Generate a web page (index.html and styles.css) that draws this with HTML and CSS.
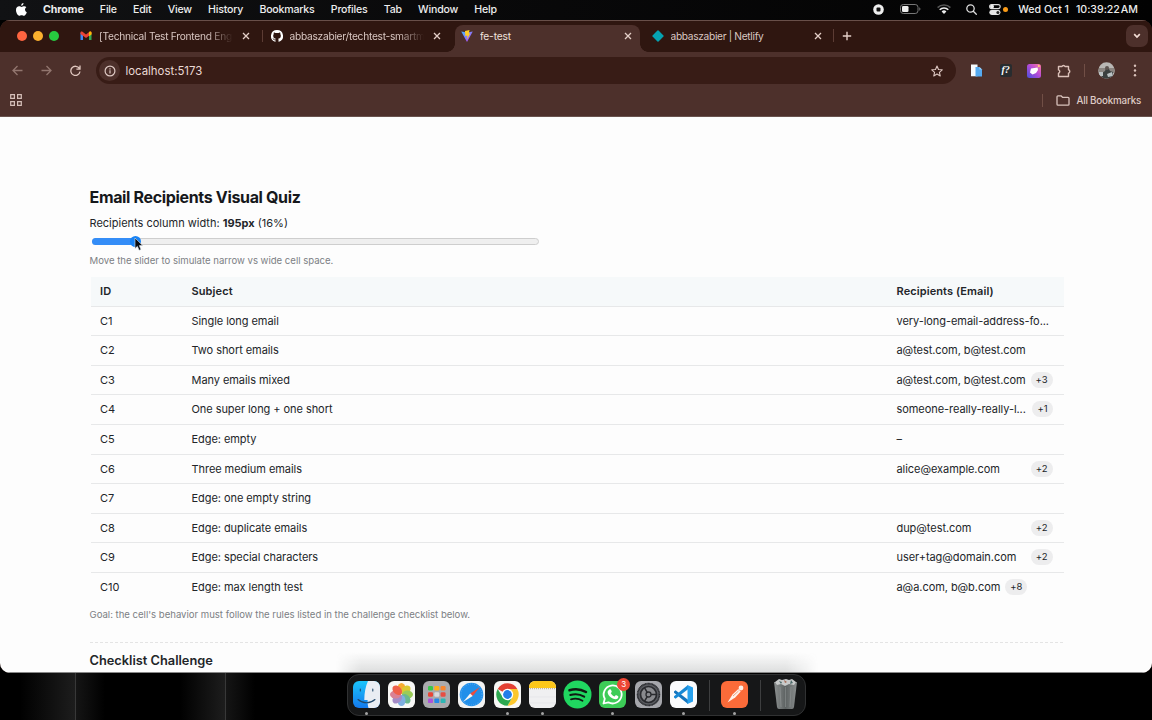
FILE: index.html
```html
<!DOCTYPE html>
<html lang="en">
<head>
<meta charset="utf-8">
<title>fe-test</title>
<link rel="stylesheet" href="styles.css">
</head>
<body>
<div class="desktop">
  <header class="menubar">
    <svg class="apple" width="11" height="13" viewBox="0 0 22 26"><path fill="#fff" d="M15 0c.3 3-2 5.500-4.600 5.500C10 2.500 12.500.3 15 0zM20.700 8.600c-4 2.500-3.200 8 .9 9.700-1 3-3.200 7-5.700 7-1.800 0-2.500-1-4.700-1s-3 1-4.700 1C3 25.300 0 19 0 14.200 0 9 3 6.600 6.200 6.600c2 0 3.700 1.200 5 1.200 1.200 0 3-1.300 5.400-1.300 1.600 0 3.200.8 4.100 2.100z"/></svg>
    <nav class="menus"><b>Chrome</b><span>File</span><span>Edit</span><span>View</span><span>History</span><span>Bookmarks</span><span>Profiles</span><span>Tab</span><span>Window</span><span>Help</span></nav>
    <div class="status">
      <svg class="st-rec" width="11" height="11" viewBox="0 0 11 11"><circle cx="5.500" cy="5.500" r="5.300" fill="#eee"/><rect x="3.500" y="3.500" width="4" height="4" rx="1" fill="#111"/></svg>
      <svg class="st-bat" width="21" height="10" viewBox="0 0 21 10"><rect x=".5" y=".5" width="17.500" height="9" rx="2.800" fill="none" stroke="#777"/><rect x="2" y="2" width="6.500" height="6" rx="1.300" fill="#eee"/><path d="M19.300 3.300v3.400c1.500-.6 1.500-2.800 0-3.400z" fill="#777"/></svg>
      <svg class="st-wifi" width="14" height="10" viewBox="0 0 14 10"><g fill="none" stroke-width="1.600"><path stroke="#555" d="M.6 3.600a9 9 0 0 1 12.800 0"/><path stroke="#eee" d="M2.700 5.800a6 6 0 0 1 8.600 0"/></g><path fill="#eee" d="M7 10 4.600 7.500a3.400 3.400 0 0 1 4.800 0z"/></svg>
      <svg class="st-find" width="11" height="11" viewBox="0 0 11 11" fill="none" stroke="#ddd" stroke-width="1.300" stroke-linecap="round"><circle cx="4.500" cy="4.500" r="3.700"/><path d="m7.300 7.300 3 3"/></svg>
      <svg class="st-cc" width="12" height="11" viewBox="0 0 12 11"><rect x=".6" y=".6" width="10.600" height="4" rx="2" fill="none" stroke="#ddd" stroke-width="1.100"/><circle cx="3" cy="2.600" r="2" fill="#eee"/><rect x=".3" y="6" width="11.200" height="4.900" rx="2.400" fill="#e5e5e5"/><circle cx="8.900" cy="8.450" r="1.500" fill="#222"/></svg>
      <i class="mic"></i><span class="date">Wed Oct 1</span><span class="clock">10:39:22<span class="ampm">AM</span></span>
    </div>
  </header>

  <main class="browser">
    <div class="tabstrip">
      <div class="lights"><i class="red"></i><i class="yellow"></i><i class="green"></i></div>
      <div class="tab">
        <svg class="fav" viewBox="0 0 24 24"><path d="M1 5v15h5V10z" fill="#4285f4"/><path d="M23 5v15h-5V10z" fill="#34a853"/><path d="M1 8V5c0-2 2.500-3 4-1.500l7 5.500 7-5.500C20.500 2 23 3 23 5v3l-11 8z" fill="#ea4335"/><path d="m18 4 1-.5C20.500 2 23 3 23 5v4l-5 3.500z" fill="#fbbc04"/></svg>
        <span class="tab-title fade">[Technical Test Frontend Engi</span><svg class="close" viewBox="0 0 8 8"><path d="m1 1 6 6M7 1 1 7"/></svg>
      </div>
      <div class="tab divided">
        <svg class="fav" viewBox="0 0 16 16"><path fill="#fff" d="M8 0a8 8 0 0 0-2.530 15.590c.4.070.55-.17.55-.38v-1.490c-2.010.37-2.530-.49-2.690-.94-.09-.23-.48-.94-.82-1.130-.28-.15-.68-.52-.01-.53.630-.01 1.080.58 1.230.82.720 1.210 1.870.87 2.330.66.070-.52.280-.87.510-1.070-1.780-.2-3.640-.89-3.640-3.950 0-.87.310-1.590.82-2.150-.08-.2-.36-1.020.08-2.120 0 0 .67-.21 2.200.82a7.400 7.400 0 0 1 4 0c1.530-1.040 2.200-.82 2.200-.82.440 1.100.160 1.920.080 2.120.51.560.82 1.270.82 2.150 0 3.070-1.870 3.750-3.650 3.950.29.250.54.730.54 1.480v2.200c0 .21.150.46.550.38A8 8 0 0 0 8 0z"/></svg>
        <span class="tab-title fade">abbaszabier/techtest-smartm</span><svg class="close" viewBox="0 0 8 8"><path d="m1 1 6 6M7 1 1 7"/></svg>
      </div>
      <div class="tab active">
        <svg class="fav" viewBox="0 0 24 24"><defs><linearGradient id="vite" x1="0" y1="0" x2="1" y2="1"><stop stop-color="#41b9ff"/><stop offset="1" stop-color="#c838f0"/></linearGradient></defs><path fill="url(#vite)" d="M.5 3 12 5l11.500-2L12 24z"/><path fill="#ffce27" d="m8 2 9-2-1.500 7 3-.5L12 19l1-8-4.500 1z"/></svg>
        <span class="tab-title">fe-test</span><svg class="close" viewBox="0 0 8 8"><path d="m1 1 6 6M7 1 1 7"/></svg>
      </div>
      <div class="tab">
        <svg class="fav" viewBox="0 0 24 24"><rect x="3.500" y="3.500" width="17" height="17" rx="1.500" transform="rotate(45 12 12)" fill="#05a2b1"/></svg>
        <span class="tab-title short">abbaszabier | Netlify</span><svg class="close" viewBox="0 0 8 8"><path d="m1 1 6 6M7 1 1 7"/></svg>
      </div>
      <div class="newtab"><svg width="10" height="10" viewBox="0 0 10 10"><path d="M5 .8v8.400M.8 5h8.400"/></svg></div>
      <div class="tabsearch"><svg width="8" height="6" viewBox="0 0 8 6"><path d="m1.200 1.200 2.800 2.800 2.800-2.800"/></svg></div>
    </div>

    <div class="toolbar">
      <div class="nav">
        <svg class="dim" width="11" height="11" viewBox="0 0 11 11"><path d="M10.500 5.500H1M5.500 1 1 5.500 5.500 10"/></svg>
        <svg class="dim" width="11" height="11" viewBox="0 0 11 11"><path d="M.5 5.500H10M5.500 1 10 5.500 5.500 10"/></svg>
        <svg width="11" height="11" viewBox="0 0 11 11"><path d="M9.400 3.500A4.600 4.600 0 1 0 10 6.500M10 .5v3.600H6.400"/></svg>
      </div>
      <div class="omnibox">
        <span class="info"><svg width="12" height="12" viewBox="0 0 12 12"><circle cx="6" cy="6" r="4.900" fill="none" stroke="#ddc8c3" stroke-width="1.200"/><path d="M6 5.300v3.200M6 3.200v1.200" stroke="#ddc8c3" stroke-width="1.200"/></svg></span>
        <span class="url">localhost:5173</span>
        <svg width="12" height="12" viewBox="0 0 24 24" fill="none" stroke="#dcc6c0" stroke-width="2.200" stroke-linejoin="round"><path d="m12 2 3 7 7.500.6-5.700 5 1.700 7.400L12 18l-6.500 4 1.700-7.400-5.700-5L9 9z"/></svg>
      </div>
      <div class="extensions">
        <svg width="12" height="13" viewBox="0 0 12 13"><path fill="#f6fbff" d="M0 .6h6.500v11.700H0z"/><path fill="#55aaf1" d="M4.500 3h4L11 5.500v7H4.500z"/><path fill="#a5d5fa" d="M8.500 3 11 5.500H8.500z"/></svg>
        <span class="font-ext">f?</span>
        <svg width="14" height="14" viewBox="0 0 14 14"><defs><linearGradient id="ext" x1="0" y1="1" x2="1" y2="0"><stop stop-color="#4750dc"/><stop offset=".55" stop-color="#b94bd7"/><stop offset="1" stop-color="#fb7a99"/></linearGradient></defs><rect width="14" height="14" rx="2.500" fill="url(#ext)"/><path fill="#fff" d="M4 4.500 10.600 3.500 11 6l-2 3-3.500 1.500L3 8.500z"/><circle cx="11.800" cy="2" r="1" fill="#ffd36b"/></svg>
        <svg width="14" height="14" viewBox="0 0 14 14" fill="none" stroke="#dbc0b8" stroke-width="1.400" stroke-linejoin="round"><path d="M1.500 2.500H5a1.600 1.600 0 0 1 3 0h3.500v3.300a1.700 1.700 0 0 1 0 3.300v3.400h-10V9.200a1.700 1.700 0 0 0 0-3.300z"/></svg>
      </div>
      <i class="vline tool-line"></i>
      <svg class="avatar" width="17" height="17" viewBox="0 0 17 17"><defs><clipPath id="face"><circle cx="8.500" cy="8.500" r="8.200"/></clipPath></defs><g clip-path="url(#face)"><path fill="#b9b7b4" d="M0 0h17v17H0z"/><path fill="#8b8581" d="M0 6h17v5H0z"/><path fill="#3b4040" d="M3 17l1-6 3-2 1-3 3 1 1 2 3 1v7z"/><circle cx="9" cy="6" r="2" fill="#5e5450"/><path fill="#bbc2c4" d="M1 10h4v4H1zM9 12l5-2 1 4-5 1z"/></g></svg>
      <svg class="dots" width="4" height="13" viewBox="0 0 4 13" fill="#dac2bb"><circle cx="2" cy="1.800" r="1.200"/><circle cx="2" cy="6.500" r="1.200"/><circle cx="2" cy="11.200" r="1.200"/></svg>
    </div>
    <div class="bookmarks">
      <svg width="12" height="12" viewBox="0 0 12 12" fill="none" stroke="#d5bfb9" stroke-width="1.200"><path d="M.7.700h3.700v3.700H.7zM7.600.700h3.700v3.700H7.600zM.7 7.600h3.700v3.700H.7zM7.600 7.600h3.700v3.700H7.600z"/></svg>
      <i class="vline book-line"></i>
      <svg width="14" height="11" viewBox="0 0 14 11" fill="none" stroke="#d8c2bc" stroke-width="1.300" stroke-linejoin="round"><path d="M1 1.800q0-1 1-1h3L6.500 2.300H12q1 0 1 1v5.900q0 1-1 1H2q-1 0-1-1z"/></svg>
      <span>All Bookmarks</span>
    </div>

    <section class="page">
      <h1>Email Recipients Visual Quiz</h1>
      <p class="width-label">Recipients column width: <b>195px</b> (16%)</p>
      <div class="slider"><div class="slider-fill"></div><i class="thumb"></i>
        <svg class="cursor" width="10" height="15" viewBox="0 0 10 15"><path d="M1 1v10.500l2.400-2.200 1.700 4 1.900-.8-1.700-3.900h3.400z" fill="#080b10" stroke="#dfe8f0" stroke-width=".6"/></svg>
      </div>
      <p class="hint">Move the slider to simulate narrow vs wide cell space.</p>
      <div class="table">
        <div class="row head"><span>ID</span><span>Subject</span><span>Recipients (Email)</span></div>
        <div class="row"><span>C1</span><span>Single long email</span><div class="emails"><span>very-long-email-address-fo...</span></div></div>
        <div class="row"><span>C2</span><span>Two short emails</span><div class="emails"><span>a@test.com, b@test.com</span></div></div>
        <div class="row"><span>C3</span><span>Many emails mixed</span><div class="emails"><span>a@test.com, b@test.com</span><em>+3</em></div></div>
        <div class="row"><span>C4</span><span>One super long + one short</span><div class="emails spread"><span>someone-really-really-l...</span><em>+1</em></div></div>
        <div class="row"><span>C5</span><span>Edge: empty</span><div class="emails"><span>–</span></div></div>
        <div class="row"><span>C6</span><span>Three medium emails</span><div class="emails spread"><span>alice@example.com</span><em>+2</em></div></div>
        <div class="row"><span>C7</span><span>Edge: one empty string</span><div class="emails"></div></div>
        <div class="row"><span>C8</span><span>Edge: duplicate emails</span><div class="emails spread"><span>dup@test.com</span><em>+2</em></div></div>
        <div class="row"><span>C9</span><span>Edge: special characters</span><div class="emails spread"><span>user+tag@domain.com</span><em>+2</em></div></div>
        <div class="row last"><span>C10</span><span>Edge: max length test</span><div class="emails"><span>a@a.com, b@b.com</span><em>+8</em></div></div>
      </div>
      <p class="goal">Goal: the cell's behavior must follow the rules listed in the challenge checklist below.</p>
      <h2>Checklist Challenge</h2>
      <div class="dock-glow"></div>
    </section>
  </main>

  <footer class="shelf">
    <div class="dock">
      <div class="app running"><svg viewBox="0 0 27 27"><defs><clipPath id="app"><rect width="27" height="27" rx="6"/></clipPath><linearGradient id="finder" x2="0" y2="1"><stop stop-color="#1bc5fb"/><stop offset="1" stop-color="#1479ed"/></linearGradient></defs><g clip-path="url(#app)"><path fill="url(#finder)" d="M0 0h27v27H0z"/><path fill="#e9edf3" d="M15 0h12v27H15.500c-.7-2-.9-5-.9-8h-3.300c0-7 1.200-13.500 3.700-19z"/><g fill="none" stroke="#20486b" stroke-width="1.100" stroke-linecap="round"><path d="M7.300 8v2M19.800 8v2M5 18.500c5 4.300 12 4.300 17 0"/></g></g></svg></div>
      <div class="app"><svg viewBox="0 0 27 27"><rect width="27" height="27" rx="6" fill="#f8f8f6"/><g opacity=".9"><ellipse cx="13.500" cy="7.500" rx="4" ry="5.500" fill="#f7a51c"/><ellipse cx="13.500" cy="7.500" rx="4" ry="5.500" fill="#d9c61e" transform="rotate(45 13.500 13.500)"/><ellipse cx="13.500" cy="7.500" rx="4" ry="5.500" fill="#91c748" transform="rotate(90 13.500 13.500)"/><ellipse cx="13.500" cy="7.500" rx="4" ry="5.500" fill="#5bb383" transform="rotate(135 13.500 13.500)"/><ellipse cx="13.500" cy="7.500" rx="4" ry="5.500" fill="#73a8df" transform="rotate(180 13.500 13.500)"/><ellipse cx="13.500" cy="7.500" rx="4" ry="5.500" fill="#9c80c1" transform="rotate(225 13.500 13.500)"/><ellipse cx="13.500" cy="7.500" rx="4" ry="5.500" fill="#d6758b" transform="rotate(270 13.500 13.500)"/><ellipse cx="13.500" cy="7.500" rx="4" ry="5.500" fill="#ef5038" transform="rotate(315 13.500 13.500)"/></g></svg></div>
      <div class="app"><svg viewBox="0 0 27 27"><rect width="27" height="27" rx="6" fill="#aaaaad"/><g><rect x="5" y="5" width="5" height="4.500" rx="1.200" fill="#39c84b"/><rect x="11.300" y="5" width="5" height="4.500" rx="1.200" fill="#ffb019"/><rect x="17.600" y="5" width="5" height="4.500" rx="1.200" fill="#f78630"/><rect x="5" y="11.300" width="5" height="4.500" rx="1.200" fill="#e94435"/><rect x="11.300" y="11.300" width="5" height="4.500" rx="1.200" fill="#d9d9dc"/><rect x="17.600" y="11.300" width="5" height="4.500" rx="1.200" fill="#e64e43"/><rect x="5" y="17.600" width="5" height="4.500" rx="1.200" fill="#ad52d9"/><rect x="11.300" y="17.600" width="5" height="4.500" rx="1.200" fill="#2588e8"/><rect x="17.600" y="17.600" width="5" height="4.500" rx="1.200" fill="#2db6b4"/></g></svg></div>
      <div class="app"><svg viewBox="0 0 27 27"><rect width="27" height="27" rx="6" fill="#f3f3f2"/><circle cx="13.500" cy="13.500" r="11.800" fill="#228fea"/><circle cx="13.500" cy="13.500" r="10.500" fill="none" stroke="#82c3f4" stroke-width="1" stroke-dasharray=".5 1.500"/><path fill="#ee4c3d" d="m22 6-7.300 9-2.500-2.500z"/><path fill="#f6f6f6" d="m5 21 7.200-8.500 2.500 2.500z"/></svg></div>
      <div class="app running"><svg viewBox="0 0 27 27"><rect width="27" height="27" rx="6" fill="#f7f7f5"/><path fill="#e34134" d="M13.500 13.500 3.700 7.900A11.300 11.300 0 0 1 23.300 7.900H13.500z"/><path fill="#fcc72c" d="M13.500 8h9.800a11.300 11.300 0 0 1-9.800 16.800l4.800-8.500z"/><path fill="#2da84f" d="M3.700 7.900a11.300 11.300 0 0 0 9.800 16.900l4.800-8.500H8.700z"/><circle cx="13.500" cy="13.500" r="5.700" fill="#fff"/><circle cx="13.500" cy="13.500" r="4.400" fill="#247de9"/></svg></div>
      <div class="app running"><svg viewBox="0 0 27 27"><g clip-path="url(#app)"><path fill="#f0f0f1" d="M0 0h27v27H0z"/><path fill="#fdc719" d="M0 0h27v7H0z"/><path d="M1 7.700h25" stroke="#b7a987" stroke-dasharray="1 1"/><path d="M0 16h27M0 22h27" stroke="#e4e4e6" stroke-width=".7"/></g></svg></div>
      <div class="app"><svg viewBox="0 0 27 27"><circle cx="13.500" cy="13.500" r="14" fill="#20d760"/><g fill="none" stroke="#101a12" stroke-linecap="round"><path d="M5.500 9.300c5.600-1.700 11.500-1.100 16.500 1.700" stroke-width="2.500"/><path d="M6.300 14c4.700-1.400 9.700-.9 13.900 1.600" stroke-width="2.100"/><path d="M7 18.300c4-1.100 8-.7 11.500 1.400" stroke-width="1.800"/></g></svg></div>
      <div class="app running"><svg viewBox="0 0 27 27"><rect width="27" height="27" rx="6" fill="#3dcc57"/><path fill="none" stroke="#fff" stroke-width="1.800" stroke-linejoin="round" d="m4.500 22.500 1.300-4.700a9 9 0 1 1 3.500 3.500z"/><path fill="#fff" d="M10.400 8.600c.6-.5 1.400-.3 1.700.4l.7 1.700-1 1.500c.9 1.600 2.100 2.600 3.800 3.200l1.300-1.300 2 1c.8.500.5 1.700-.2 2.400-1.200 1.100-2.900 1-5 0-2.400-1.200-4.400-3.300-5-5.600-.3-1.400.5-2.500 1.700-3.300z"/></svg><span class="badge">3</span></div>
      <div class="app"><svg viewBox="0 0 27 27"><rect width="27" height="27" rx="6" fill="#a6a7ac"/><circle cx="13.500" cy="13.500" r="11.300" fill="#5b5d62"/><circle cx="13.500" cy="13.500" r="10.900" fill="none" stroke="#292a2e" stroke-width="1.700" stroke-dasharray="1 .4"/><g fill="none" stroke="#292a2e"><circle cx="13.500" cy="13.500" r="8" fill="#898a8e" stroke-width="1.700"/><circle cx="13.500" cy="13.500" r="2.500" stroke-width="1.300"/><path d="M16 13.500h5M12.200 11.300l-2.600-4.500M12.200 15.700l-2.600 4.500" stroke-width="1.500"/></g></svg></div>
      <div class="app running"><svg viewBox="0 0 27 27"><rect width="27" height="27" rx="6" fill="#fafbfc"/><path fill="#1474bd" d="m4 10.500 1.500-1.300L18 18.800V23L4 11.800z"/><path fill="#1688d5" d="m4 16.500 1.500 1.300L18 8.200V4L4 15.200z"/><path fill="#27a1ee" d="m17.500 4 5.500 2.500v14L17.500 23z"/></svg></div>
      <i class="separator"></i>
      <div class="app running"><svg viewBox="0 0 27 27"><rect width="27" height="27" rx="6" fill="#fb6b39"/><circle cx="20" cy="7" r="2.400" fill="#fff2e9"/><path fill="#fff2e9" d="m17.300 8 2.400 2.400-5.500 6-7.700 5.200 5-8z"/><path d="m12 15 5.500-5" stroke="#dc7b57" stroke-width=".7"/></svg></div>
      <i class="separator"></i>
      <div class="app trash"><svg viewBox="0 0 27 32"><defs><linearGradient id="bin"><stop stop-color="#8d9191"/><stop offset=".5" stop-color="#5d6262"/><stop offset="1" stop-color="#8b8f8f"/></linearGradient></defs><path fill="url(#bin)" d="M2 4h23l-3 25q-.3 2-2 2H7q-1.700 0-2-2z"/><path fill="#c8caca" d="m3 4 4-3 3 1 4-1 3 1 3-1 4 3-2 3-5-1-4 2-4-2-4 1z"/><path fill="#4b6a69" d="m7 3 3 1-1 2zM19 2l2 3-3 1z"/><path fill="#a66b56" d="m12 2 3 2-2 1z"/><path d="m8 9 1 20M13.500 9v20M19 9l-1 20" stroke="#999d9d" stroke-width=".5"/></svg></div>
    </div>
  </footer>
</div>
</body>
</html>
```
FILE: styles.css
```css
* { box-sizing: border-box; }
body { margin: 0; background: #000; font-family: Inter, "Liberation Sans", sans-serif; }
h1, h2, p { margin: 0; }
svg { display: block; flex: none; }
.desktop { width: 1152px; height: 720px; overflow: hidden; display: flex; flex-direction: column; background: #000; }

.menubar { height: 20px; flex: none; display: flex; align-items: center; padding: 0 14px 2px 16px; background: linear-gradient(90deg, #111214, #09090a 40%, #020202); color: #ededed; font-size: 10.6px; font-weight: 500; }
.apple { margin-right: 16px; }
.menus { display: flex; gap: 16.2px; white-space: nowrap; letter-spacing: -.2px; }
.menus b { font-weight: 700; letter-spacing: -.05px; }
.status { margin-left: auto; display: flex; align-items: center; white-space: nowrap; }
.st-bat { margin-left: 16px; }
.st-wifi { margin-left: 16px; }
.st-find { margin-left: 15px; }
.st-cc { margin-left: 12px; }
.mic { width: 5px; height: 5px; border-radius: 50%; background: #fb9c18; margin: 0 10px 0 2px; }
.clock { margin-left: 7px; letter-spacing: -.02px; }
.ampm { margin-left: 1px; }

.browser { height: 653px; flex: none; display: flex; flex-direction: column; border-radius: 10px; overflow: hidden; background: #4d302b; }
.tabstrip { height: 32px; flex: none; display: flex; background: #2f1610; border-top: 1px solid #684f49; }
.lights { width: 72px; flex: none; padding: 0 0 1px 16.500px; display: flex; align-items: center; gap: 6px; }
.lights i { width: 10px; height: 10px; border-radius: 50%; }
.red { background: #fe6540; }
.yellow { background: #fcb12e; }
.green { background: #27ca40; }
.tab { width: 190.5px; height: 31px; flex: none; display: flex; align-items: center; padding: 0 12.500px 1px 8px; color: #d9c7c2; font-size: 10.2px; letter-spacing: -.26px; position: relative; }
.tab.active { background: #4d302b; border-radius: 8px 8px 0 0; height: 27px; margin: 4px 3.500px 0 2px; width: 185px; padding: 0 8.500px 5px 6px; color: #f0e2de; letter-spacing: -.15px; }
.tab.active::before, .tab.active::after { content: ""; position: absolute; bottom: 0; width: 8px; height: 8px; }
.tab.active::before { left: -8px; background: radial-gradient(circle at 0 0, #2f1610 7.500px, #4d302b 8px); }
.tab.active::after { right: -8px; background: radial-gradient(circle at 100% 0, #2f1610 7.500px, #4d302b 8px); }
.divided::before { content: ""; position: absolute; left: -1px; top: 9px; width: 1px; height: 12px; background: #5c3c34; }
.fav { width: 12px; height: 12px; margin-right: 7px; }
.tab-title { width: 134px; overflow: hidden; white-space: nowrap; }
.tab-title.short { letter-spacing: -.32px; }
.fade { -webkit-mask-image: linear-gradient(90deg, #000 108px, transparent 134px); mask-image: linear-gradient(90deg, #000 108px, transparent 134px); }
.close { width: 8px; height: 8px; margin-left: auto; fill: none; stroke: #e4cfc8; stroke-width: 1.300; }
.newtab { display: flex; align-items: center; height: 13px; margin-top: 8px; margin-left: -1px; padding-left: 8px; border-left: 1px solid #5c3c34; fill: none; stroke: #e4cfc8; }
.newtab svg { stroke-width: 1.400; }
.tabsearch { width: 22px; height: 22px; margin: 4px 4px 0 auto; border-radius: 7px; background: #4d302b; display: grid; place-items: center; fill: none; stroke: #f3ddd5; stroke-width: 1.700; }

.toolbar { height: 32px; flex: none; display: flex; align-items: center; padding: 5px 15px 0 12px; }
.nav { width: 84px; flex: none; display: flex; gap: 18px; fill: none; stroke: #dfc6be; stroke-width: 1.300; }
.dim { stroke: #92766f; }
.omnibox { width: 860px; height: 27px; flex: none; display: flex; align-items: center; padding: 0 13.500px 0 3px; border-radius: 14px; background: #381c16; color: #ead9d4; font-size: 11.4px; }
.info { width: 21px; height: 21px; border-radius: 50%; background: #4d302b; display: grid; place-items: center; margin-right: 5.500px; }
.url { flex: 1; }
.extensions { width: 100px; margin-left: 15px; display: flex; align-items: center; justify-content: space-between; }
.font-ext { width: 12px; height: 13px; border-radius: 2px; background: #282c2f; color: #fff; font: italic bold 10px/12px "Liberation Serif", serif; text-align: center; margin-left: 1px; }
.vline { width: 1px; height: 13px; background: #714f46; }
.tool-line { margin-left: 13px; }
.avatar { margin-left: 13px; }
.dots { margin-left: auto; }
.bookmarks { height: 33px; flex: none; display: flex; align-items: center; padding: 0 11px 0 10px; border-bottom: 1px solid #69534e; color: #dfcbc6; font-size: 9.800px; font-weight: 500; letter-spacing: -.2px; }
.book-line { margin: 0 13px 0 auto; }
.bookmarks span { margin-left: 6px; }

.page { flex: 1; min-height: 0; position: relative; overflow: hidden; padding: 70px 89.500px 0; background: #fdfdfd; color: #222529; font-size: 11px; border-bottom: 1px solid #888; }
h1 { font-size: 16px; line-height: 20px; font-weight: 700; letter-spacing: -.34px; color: #16181b; }
.width-label { margin-top: 8px; line-height: 17px; }
.slider { width: 447px; height: 7px; margin: 6px 0 0 2px; border: 1px solid #cecece; border-radius: 4px; background: #efefef; position: relative; }
.slider-fill { width: 42px; height: 7px; margin: -1px; border-radius: 4px; background: #348df7; }
.thumb { position: absolute; left: 37px; top: -3px; width: 11px; height: 11px; border-radius: 50%; background: #1983f4; }
.cursor { position: absolute; left: 41px; top: -2px; }
.hint, .goal { font-size: 9.600px; line-height: 14px; color: #7c8084; letter-spacing: -.02px; }
.hint { margin-top: 9px; }
.table { margin: 8.500px -1px 0 1.500px; letter-spacing: -.06px; }
.row { display: grid; grid-template-columns: 91.500px 705px 1fr; align-items: center; height: 29.62px; padding: 0 0 .5px 9px; border-bottom: 1px solid #e7e8e9; white-space: nowrap; }
.row.head { height: 30px; background: #f6f9fa; font-weight: 600; letter-spacing: .1px; }
.row.last { border: 0; padding-bottom: 2px; }
.emails { width: 156px; display: flex; align-items: center; gap: 5px; }
.emails.spread { justify-content: space-between; }
.emails em { height: 16px; padding: 0 5px; border-radius: 8px; background: #ededee; font-style: normal; font-size: 9.500px; line-height: 16px; }
.goal { margin-top: 5px; }
h2 { margin-top: 20px; padding-top: 9px; border-top: 1px dashed #e4e4e4; font-size: 12.800px; line-height: 18px; font-weight: 600; }
.dock-glow { position: absolute; left: 336px; bottom: 0; width: 482px; height: 20px; background: linear-gradient(transparent, rgba(110,115,115,.22)); -webkit-mask-image: linear-gradient(90deg, transparent, #000 25px, #000 450px, transparent); mask-image: linear-gradient(90deg, transparent, #000 25px, #000 450px, transparent); }

.shelf { flex: 1; display: flex; justify-content: center; padding-top: 1px; background: linear-gradient(90deg, transparent 20px, #1d1d1d 75px, #383838 75px, #383838 76px, #151515 76px, transparent 105px, transparent 180px, #1d1d1d 225px, #383838 225px, #383838 226px, #151515 226px, transparent 255px); }
.dock { width: 459px; height: 42px; display: flex; padding: 6px 5px 0; border: 1px solid #303132; border-radius: 12px; background: #161718; }
.app { width: 27px; height: 27px; flex: none; margin-right: 8.250px; position: relative; }
.app svg { width: 27px; height: 27px; overflow: visible; }
.app.running::after { content: ""; position: absolute; left: 12px; bottom: -6.500px; width: 3px; height: 3px; border-radius: 50%; background: #a3a3a3; }
.separator { width: 1px; height: 31px; flex: none; margin: -1px 11.500px 0 3.500px; background: #3d3e3f; }
.app.trash { margin: -3px 0 0; }
.app.trash svg { height: 32px; width: 27px; }
.badge { position: absolute; left: 18px; top: -3px; width: 13px; height: 13px; border-radius: 50%; background: #ee4634; color: #fff; font-size: 8px; line-height: 13px; text-align: center; }
```
